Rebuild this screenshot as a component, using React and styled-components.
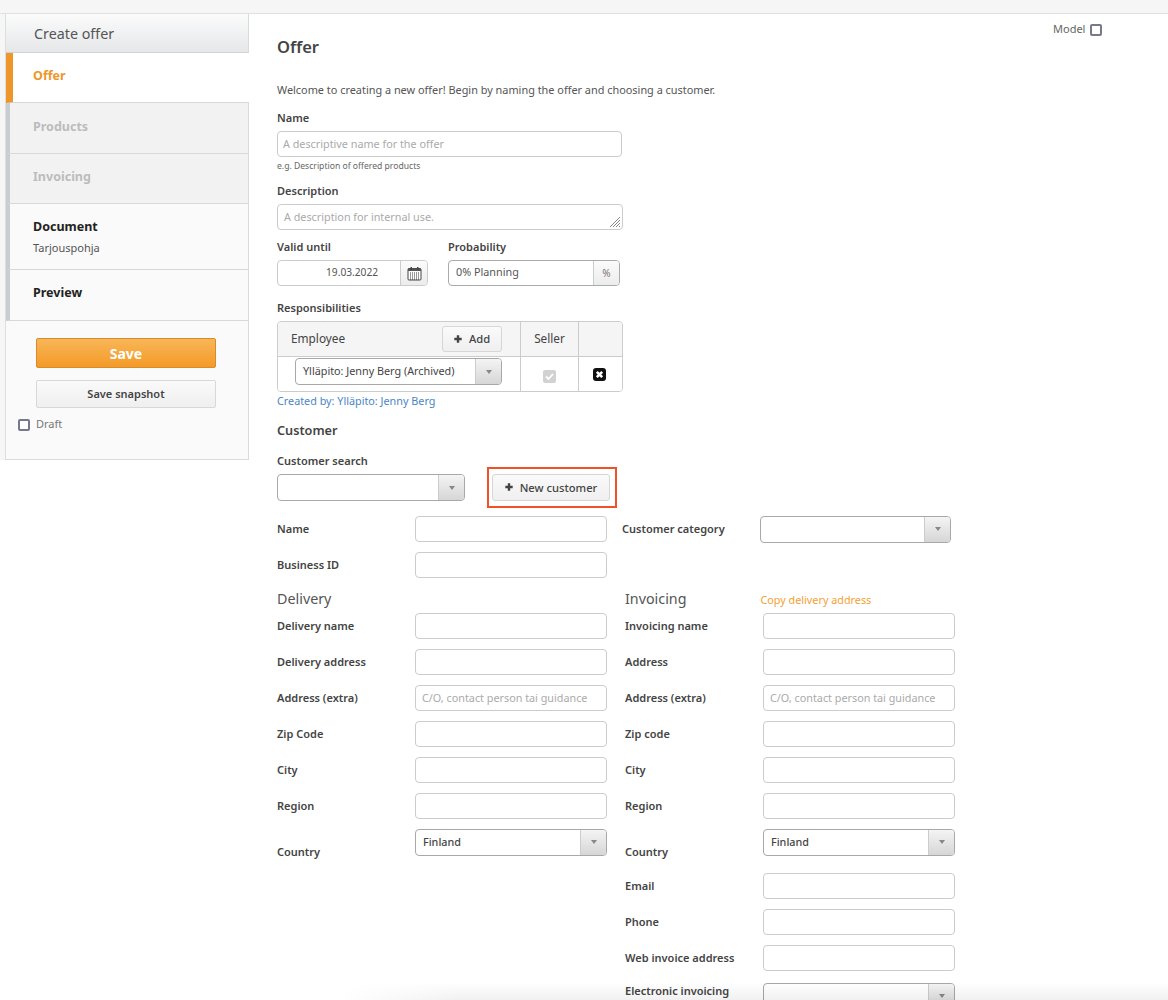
import React from "react";
import styled, { createGlobalStyle } from "styled-components";

const Global = createGlobalStyle`
  html, body { margin: 0; padding: 0; background: #fff; overflow: hidden; }
  body { font-family: "Noto Sans", "Open Sans", sans-serif; color: #444; }
  * { box-sizing: border-box; }
`;

const Page = styled.div`
  position: relative;
  width: 1168px;
  height: 1000px;
  overflow: hidden;
  background: #fff;
`;
const TopStrip = styled.div`
  height: 14px;
  background: #f6f6f6;
  border-bottom: 1px solid #e0e0e0;
`;
const Body = styled.div`
  display: flex;
  align-items: flex-start;
`;
const SideWrap = styled.div`
  width: 249px;
  flex: none;
  padding-left: 5px;
  background: #f6f6f6;
`;
const Side = styled.aside`
  background: #fafafa;
  border-left: 1px solid #dcdee0;
  border-right: 1px solid #d8dadd;
  border-bottom: 1px solid #d8dadd;
`;
const SideHead = styled.div`
  height: 39px;
  padding-left: 28px;
  display: flex;
  align-items: center;
  font-size: 14.300px;
  color: #555;
  background: linear-gradient(#fbfbfb, #e5e7e9);
  border-bottom: 1px solid #cfd2d6;
`;
const Step = styled.div`
  height: ${p => p.$h || 50}px;
  padding-top: ${p => p.$top ? 14 : 0}px;
  padding-bottom: ${p => p.$pb || 0}px;
  padding-left: ${p => p.$active ? 20 : 23}px;
  display: flex;
  flex-direction: column;
  justify-content: ${p => p.$top ? "flex-start" : "center"};
  border-left: ${p => p.$active ? "7px solid #ee962a" : "4px solid #c9ccd1"};
  border-bottom: 1px solid #d6d8db;
  background: ${p => p.$active ? "#fff" : p.$off ? "#f2f2f2" : "#fafafa"};
  margin-right: ${p => p.$active ? "-1px" : 0};
  position: ${p => p.$active ? "relative" : "static"};
  font-size: 12.500px;
  font-weight: 700;
  color: ${p => p.$active ? "#ee962a" : p.$off ? "#bcbcbc" : "#222"};
`;
const StepSub = styled.div`
  font-size: 11px;
  font-weight: 400;
  color: #555;
  margin-top: 5px;
`;
const Actions = styled.div`
  height: 138px;
  padding: 17px 0 0 30px;
`;
const SaveBtn = styled.div`
  width: 180px;
  height: 30px;
  border-radius: 2px;
  border: 1px solid #d98a2a;
  background: linear-gradient(#f8b657, #f49a28);
  color: #fff;
  font-size: 14px;
  font-weight: 700;
  display: flex;
  align-items: center;
  justify-content: center;
`;
const SnapBtn = styled.div`
  width: 180px;
  height: 28px;
  margin-top: 12px;
  padding-bottom: 2px;
  border-radius: 2px;
  border: 1px solid #d8d8d8;
  background: linear-gradient(#fafafa, #efefef);
  color: #444;
  font-size: 11px;
  font-weight: 600;
  display: flex;
  align-items: center;
  justify-content: center;
`;
const DraftRow = styled.div`
  display: flex;
  align-items: center;
  gap: 6px;
  margin: 8px 0 0 -18px;
  font-size: 11px;
  color: #777;
`;
const Box = styled.span`
  display: inline-block;
  width: 12px;
  height: 12px;
  border: 2px solid #78788c;
  border-radius: 2px;
  background: #fff;
  position: relative;
  top: 1px;
`;
const Main = styled.main`
  flex: 1;
  position: relative;
  padding: 23px 0 0 28px;
`;
const ModelTag = styled.div`
  position: absolute;
  top: 7px;
  left: 804px;
  display: flex;
  align-items: center;
  gap: 5px;
  font-size: 11px;
  color: #666;
`;
const Title = styled.h1`
  margin: 0;
  font-size: 16.500px;
  line-height: 20px;
  font-weight: 600;
  color: #444;
`;
const Intro = styled.p`
  margin: 25px 0 0;
  font-size: 10.900px;
  line-height: 16px;
  color: #555;
`;
const Label = styled.div`
  font-size: 11px;
  line-height: 14px;
  font-weight: 600;
  color: #444;
  margin-top: ${p => p.$mt || 0}px;
  margin-bottom: ${p => p.$mb ?? 6}px;
`;
const Field = styled.div`
  width: ${p => p.$w || 192}px;
  height: ${p => p.$h || 26}px;
  border: 1px solid ${p => p.$edge || "#ccc"};
  border-radius: 4px;
  background: #fff;
  padding-left: ${p => p.$pl || 6}px;
  padding-bottom: ${p => p.$pb ?? 2}px;
  font-size: ${p => p.$fs || 10.8}px;
  color: ${p => p.$dark ? "#555" : "#aaa"};
  display: flex;
  align-items: center;
  position: relative;
  flex: none;
`;
const Hint = styled.div`
  font-size: 8.600px;
  line-height: 12px;
  color: #666;
  margin-top: 3px;
`;
const Grip = styled.svg`
  position: absolute;
  right: 1px;
  bottom: 1px;
`;
const Pair = styled.div`
  display: flex;
  gap: 20px;
  margin-top: 10px;
`;
const Addon = styled.div`
  position: absolute;
  top: 0;
  bottom: 0;
  right: 0;
  width: ${p => p.$w || 26}px;
  border-left: 1px solid #ccc;
  background: linear-gradient(#fbfbfb, #ececec);
  border-radius: 0 3px 3px 0;
  display: flex;
  align-items: center;
  justify-content: center;
  font-size: 10px;
  color: #777;
`;
const Select = styled.div`
  width: ${p => p.$w}px;
  height: 27px;
  border: 1px solid #a8a8a8;
  border-radius: 4px;
  background: #fff;
  font-size: 10.800px;
  font-weight: ${p => p.$bold ? 500 : 400};
  color: #444;
  padding-left: 7px;
  padding-bottom: 2px;
  display: flex;
  align-items: center;
  position: relative;
  flex: none;
`;
const Caret = styled.div`
  position: absolute;
  top: 0;
  bottom: 0;
  right: 0;
  width: 26px;
  border-left: 1px solid #ccc;
  background: linear-gradient(#f4f4f4, #d6d6d6);
  border-radius: 0 3px 3px 0;
  display: flex;
  align-items: center;
  justify-content: center;
  &::after {
    content: "";
    border-left: 3px solid transparent;
    border-right: 3px solid transparent;
    border-top: 4px solid #888;
  }
`;
const Table = styled.div`
  width: 346px;
  height: 71px;
  border: 1px solid #ccc;
  border-radius: 4px;
  display: grid;
  grid-template-columns: 243px 58px 1fr;
  grid-template-rows: 35px 1fr;
  overflow: hidden;
`;
const Cell = styled.div`
  background: ${p => p.$head ? "#f5f5f5" : "#fff"};
  border-right: ${p => p.$last ? "none" : "1px solid #ccc"};
  border-bottom: ${p => p.$head ? "1px solid #ccc" : "none"};
  display: flex;
  align-items: center;
  justify-content: ${p => p.$between ? "space-between" : p.$start ? "flex-start" : "center"};
  padding: ${p => p.$pad || 0};
  font-size: 11.800px;
  color: #444;
`;
const CellText = styled.span`
  position: relative;
  top: -1px;
`;
const Btn = styled.div`
  height: ${p => p.$h || 27}px;
  width: ${p => p.$w}px;
  padding-bottom: 1px;
  border: 1px solid #d6d6d6;
  border-radius: 3px;
  background: linear-gradient(#fafafa, #efefef);
  font-size: 11.200px;
  font-weight: 500;
  color: #444;
  display: flex;
  align-items: center;
  justify-content: center;
  gap: 7px;
`;
const Created = styled.div`
  font-size: 10.800px;
  line-height: 14px;
  color: #4a86c5;
  margin-top: 2px;
`;
const Section = styled.h2`
  margin: 13px 0 0;
  font-size: 12.700px;
  line-height: 18px;
  font-weight: 600;
  color: #444;
`;
const SearchRow = styled.div`
  display: flex;
  align-items: center;
  margin-top: -1px;
`;
const Highlight = styled.div`
  margin-left: 22px;
  border: 2px solid #f0512a;
  padding: 5px 5px 5px 3px;
`;
const Rows = styled.div`
  display: grid;
  grid-template-columns: 345px 1fr;
  margin-top: 8px;
`;
const Col = styled.div`
  display: flex;
  flex-direction: column;
`;
const Row = styled.div`
  display: flex;
  align-items: center;
  height: 26px;
  margin-bottom: ${p => p.$mb ?? 10}px;
`;
const RowLabel = styled.div`
  width: 138px;
  flex: none;
  padding-bottom: 2px;
  font-size: 11px;
  font-weight: 600;
  color: #444;
  position: relative;
  top: ${p => p.$shift || 0}px;
`;
const AddrGrid = styled.div`
  display: grid;
  grid-template-columns: 348px 1fr;
`;
const Sub = styled.div`
  display: flex;
  align-items: center;
  height: 21px;
  margin-bottom: 4px;
  font-size: 14.300px;
  color: #555;
`;
const CopyLink = styled.span`
  font-size: 10.800px;
  color: #f5a033;
  margin-left: 74px;
  position: relative;
  top: 1px;
`;
const BottomShade = styled.div`
  position: absolute;
  left: 340px;
  right: 0;
  bottom: 0;
  height: 18px;
  background: linear-gradient(rgba(0,0,0,0), rgba(0,0,0,0.055));
  -webkit-mask-image: linear-gradient(90deg, transparent, #000 120px);
  mask-image: linear-gradient(90deg, transparent, #000 120px);
`;
const CloseWrap = styled.span`
  display: inline-flex;
  position: relative;
  left: -1px;
`;
const CheckWrap = styled.span`
  display: inline-flex;
  position: relative;
  top: 2px;
`;

const Plus = () => (
  <svg width="8" height="8" viewBox="0 0 8 8"><path d="M2.800 0.300h2.400v2.500h2.500v2.400H5.200v2.500H2.800V5.200H0.300V2.800h2.500z" fill="#444" /></svg>
);
const Calendar = () => (
  <svg width="15" height="15" viewBox="0 0 15 15">
    <rect x="1" y="2.500" width="13" height="11.500" rx="1" fill="#fff" stroke="#444" />
    <rect x="1" y="2.500" width="13" height="2.500" fill="#555" />
    <rect x="3.500" y="1" width="1.500" height="3" fill="#444" />
    <rect x="10" y="1" width="1.500" height="3" fill="#444" />
    <path d="M3 7h9M3 9h9M3 11h9M3 13h9" stroke="#333" strokeWidth="1" strokeDasharray="1 1" />
  </svg>
);
const CloseSquare = () => (
  <svg width="13" height="13" viewBox="0 0 13 13">
    <rect width="13" height="13" rx="3" fill="#111" />
    <path d="M3.800 3.800l5.400 5.400M9.200 3.800l-5.400 5.400" stroke="#fff" strokeWidth="2.600" />
  </svg>
);
const DisabledCheck = () => (
  <svg width="13" height="13" viewBox="0 0 13 13">
    <rect width="13" height="13" rx="2" fill="#d2d2d2" />
    <path d="M3 6.500l2.500 2.500L10 4" stroke="#fff" strokeWidth="1.800" fill="none" />
  </svg>
);

const left = [
  ["Delivery name"], ["Delivery address"],
  ["Address (extra)", "C/O, contact person tai guidance"],
  ["Zip Code"], ["City"], ["Region"],
];
const right = [
  ["Invoicing name"], ["Address"],
  ["Address (extra)", "C/O, contact person tai guidance"],
  ["Zip code"], ["City"], ["Region"],
];

const AddrRows = ({ items }) => items.map(([l, ph]) => (
  <Row key={l}>
    <RowLabel>{l}</RowLabel>
    <Field>{ph}</Field>
  </Row>
));

export default function App() {
  return (
    <Page>
      <Global />
      <TopStrip />
      <Body>
        <SideWrap>
          <Side>
            <SideHead>Create offer</SideHead>
            <Step $active $pb={4}>Offer</Step>
            <Step $off $h={51} $pb={3}>Products</Step>
            <Step $off $pb={5}>Invoicing</Step>
            <Step $h={66} $top>Document<StepSub>Tarjouspohja</StepSub></Step>
            <Step $h={51} $pb={5}>Preview</Step>
            <Actions>
              <SaveBtn>Save</SaveBtn>
              <SnapBtn>Save snapshot</SnapBtn>
              <DraftRow><Box />Draft</DraftRow>
            </Actions>
          </Side>
        </SideWrap>
        <Main>
          <ModelTag>Model <Box /></ModelTag>
          <Title>Offer</Title>
          <Intro>Welcome to creating a new offer! Begin by naming the offer and choosing a customer.</Intro>
          <Label $mt={13}>Name</Label>
          <Field $w={345} $pl={5}>A descriptive name for the offer</Field>
          <Hint>e.g. Description of offered products</Hint>
          <Label $mt={12}>Description</Label>
          <Field $w={346} $h={26}>
            A description for internal use.
            <Grip width="12" height="12" viewBox="0 0 12 12"><path d="M11 1L1 11M11 4L4 11M11 7L7 11M11 10L10 11" stroke="#888" strokeWidth="1" /></Grip>
          </Field>
          <Pair>
            <div>
              <Label>Valid until</Label>
              <Field $w={151} $pl={48} $fs={10.2} $dark>19.03.2022<Addon $w={27}><Calendar /></Addon></Field>
            </div>
            <div>
              <Label>Probability</Label>
              <Field $w={172} $pl={7} $pb={3} $dark $edge="#aaa">0% Planning<Addon>%</Addon></Field>
            </div>
          </Pair>
          <Label $mt={15}>Responsibilities</Label>
          <Table>
            <Cell $head $between $pad="0 18px 0 13px"><CellText>Employee</CellText><Btn $w={60} $h={26}><Plus />Add</Btn></Cell>
            <Cell $head><CellText>Seller</CellText></Cell>
            <Cell $head $last />
            <Cell $start $pad="0 0 5px 17px"><Select $w={207}>Ylläpito: Jenny Berg (Archived)<Caret /></Select></Cell>
            <Cell><CheckWrap><DisabledCheck /></CheckWrap></Cell>
            <Cell $last><CloseWrap><CloseSquare /></CloseWrap></Cell>
          </Table>
          <Created>Created by: Ylläpito: Jenny Berg</Created>
          <Section>Customer</Section>
          <Label $mt={15} $mb={0}>Customer search</Label>
          <SearchRow>
            <Select $w={188}><Caret /></Select>
            <Highlight><Btn $w={118}><Plus />New customer</Btn></Highlight>
          </SearchRow>
          <Rows>
            <Col>
              <Row><RowLabel>Name</RowLabel><Field /></Row>
              <Row><RowLabel>Business ID</RowLabel><Field /></Row>
            </Col>
            <Col>
              <Row><RowLabel>Customer category</RowLabel><Select $w={191}><Caret /></Select></Row>
            </Col>
          </Rows>
          <AddrGrid>
            <Col>
              <Sub>Delivery</Sub>
              <AddrRows items={left} />
              <Row $mb={18}><RowLabel $shift={10}>Country</RowLabel><Select $w={192} $bold>Finland<Caret /></Select></Row>
            </Col>
            <Col>
              <Sub>Invoicing<CopyLink>Copy delivery address</CopyLink></Sub>
              <AddrRows items={right} />
              <Row $mb={18}><RowLabel $shift={10}>Country</RowLabel><Select $w={192} $bold>Finland<Caret /></Select></Row>
              <Row><RowLabel>Email</RowLabel><Field /></Row>
              <Row><RowLabel>Phone</RowLabel><Field /></Row>
              <Row $mb={12}><RowLabel>Web invoice address</RowLabel><Field /></Row>
              <Row><RowLabel $shift={-5}>Electronic invoicing</RowLabel><Select $w={192}><Caret /></Select></Row>
            </Col>
          </AddrGrid>
        </Main>
      </Body>
      <BottomShade />
    </Page>
  );
}
